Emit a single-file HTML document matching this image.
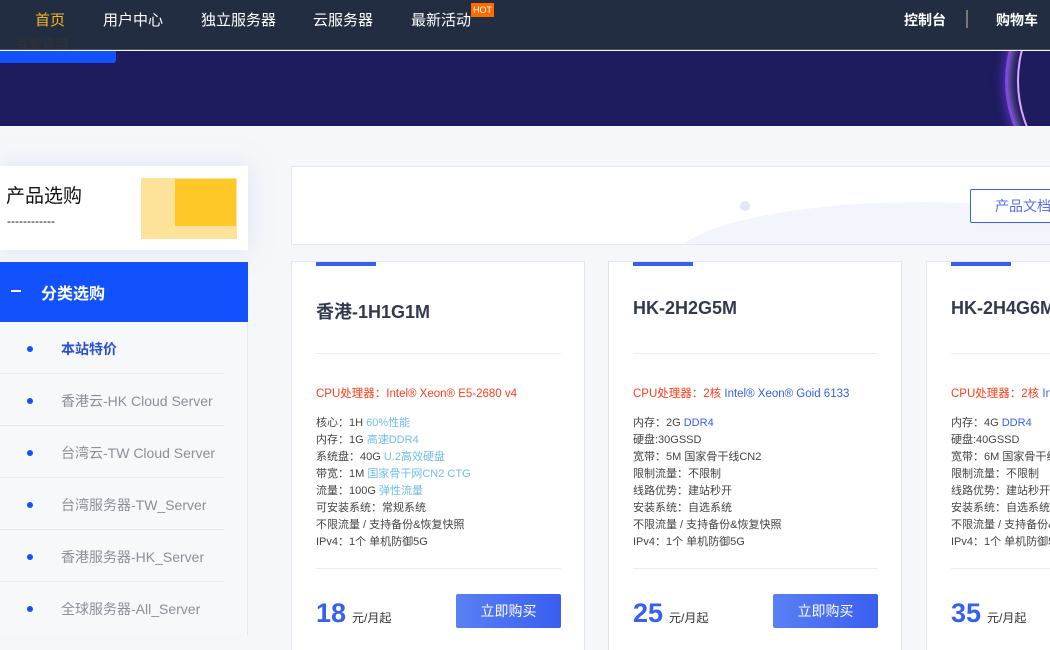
<!DOCTYPE html>
<html><head><meta charset="utf-8"><style>
*{margin:0;padding:0;box-sizing:border-box}
html,body{width:1050px;height:650px;overflow:hidden}
body{background:#f6f7fb;font-family:"Liberation Sans","Noto Sans CJK SC",sans-serif;position:relative}
.nav{position:absolute;left:0;top:0;width:1050px;height:50px;background:#222d42;border-bottom:1px solid #4a5260}
.nav span{position:absolute;top:9px;color:#fff;font-size:15px}
.banner{position:absolute;left:0;top:51px;width:1050px;height:75px;background:#1e1b5e;overflow:hidden}
.abs{position:absolute}
.side{position:absolute;left:0;top:166px;width:248px;height:84px;background:#fff;box-shadow:0 0 20px rgba(200,205,235,.5)}
.cat{position:absolute;left:0;top:262px;width:248px;height:60px;background:#1151fe;color:#fff;font-size:16px;font-weight:bold}
.list{position:absolute;left:0;top:322px;width:248px;height:313px;background:#f7f8fa;border-right:1px solid #e6e8ef}
.li{position:absolute;left:0;width:224px;height:52px;border-bottom:1px solid #e8eaef;font-size:14px;color:#8a8f99}
.li i{position:absolute;left:27px;top:24px;width:6px;height:6px;border-radius:50%;background:#1151fe}
.li b{position:absolute;left:61px;top:17px;font-weight:normal}
.top{position:absolute;left:291px;top:166px;width:759px;height:79px;background:#fff;border:1px solid #e3e6ef;border-right:0;overflow:hidden}
.card{position:absolute;top:261px;width:294px;height:389px;background:#fff;border:1px solid #e3e6ef;border-bottom:0;overflow:hidden}
.card .bar{position:absolute;left:24px;top:0;width:60px;height:4px;background:#3560f0}
.card h3{position:absolute;left:24px;top:36px;font-size:18px;color:#333a4f;white-space:nowrap}
.card .hr{position:absolute;left:24px;width:245px;height:1px;background:#e8ecf4}
.card .cpu{position:absolute;left:24px;top:123px;font-size:11.5px;color:#ff3c1a;white-space:nowrap}
.card .specs{position:absolute;left:24px;top:153px;font-size:11px;color:#444;line-height:17px;white-space:nowrap}
.lb{color:#6fbde8}.bl{color:#3560f0}
.price{position:absolute;left:24px;top:336px;font-size:27px;font-weight:bold;color:#3560f0;white-space:nowrap}
.price small{font-size:12px;color:#333;font-weight:normal;margin-left:6px}
.buy{position:absolute;left:164px;top:332px;width:105px;height:34px;background:linear-gradient(90deg,#5a80f4,#3a5ef0);color:#fff;font-size:14px;text-align:center;line-height:34px;border-radius:2px}
</style></head><body>
<div class="nav">
<span style="left:35px;color:#f5b81c">首页</span>
<span style="left:103px">用户中心</span>
<span style="left:201px">独立服务器</span>
<span style="left:313px">云服务器</span>
<span style="left:411px">最新活动</span>
<div class="abs" style="left:471px;top:3px;width:23px;height:14px;background:#ff6a00;color:#fff;font-size:9px;text-align:center;line-height:14px">HOT</div>
<span style="left:904px;font-weight:bold;font-size:14px;top:10px">控制台</span>
<div class="abs" style="left:966px;top:10px;width:2px;height:18px;background:#777"></div>
<span style="left:996px;font-weight:bold;font-size:14px;top:10px">购物车</span>
<span style="left:16px;top:33px;font-size:13px;color:#333">我要咨询</span>
</div>
<div class="banner">
<div class="abs" style="left:0;top:0;width:116px;height:12px;background:#1151fe;border-radius:0 0 3px 0"></div>
<div class="abs" style="left:1005px;top:-70px;width:160px;height:200px;border-radius:50%;border:3px solid #7a4de0;box-shadow:0 0 12px #6a3ad8,inset 0 0 10px #c38af0"></div>
<div class="abs" style="left:1017px;top:-70px;width:160px;height:200px;border-radius:50%;border:2px solid #d9a8ff"></div>
</div>
<div class="side">
<div class="abs" style="left:6px;top:15px;font-size:19px;color:#111">产品选购</div>
<div class="abs" style="left:7px;top:48px;font-size:12px;color:#111">------------</div>
<div class="abs" style="left:141px;top:12px;width:96px;height:61px;background:#fde39a"></div>
<div class="abs" style="left:175px;top:13px;width:61px;height:47px;background:#ffc829"></div>
</div>
<div class="cat"><div class="abs" style="left:11px;top:28px;width:10px;height:2px;background:#fff"></div><span class="abs" style="left:41px;top:18px">分类选购</span></div>
<div class="list">
<div class="li" style="top:0"><i></i><b style="color:#2a4fd8;font-weight:bold">本站特价</b></div>
<div class="li" style="top:52px"><i></i><b>香港云-HK Cloud Server</b></div>
<div class="li" style="top:104px"><i></i><b>台湾云-TW Cloud Server</b></div>
<div class="li" style="top:156px"><i></i><b>台湾服务器-TW_Server</b></div>
<div class="li" style="top:208px"><i></i><b>香港服务器-HK_Server</b></div>
<div class="li" style="top:260px;border:0"><i></i><b>全球服务器-All_Server</b></div>
</div>
<div class="top">
<div class="abs" style="left:380px;top:35px;width:500px;height:120px;border-radius:50%;background:#f3f5fd"></div>
<div class="abs" style="left:448px;top:34px;width:10px;height:10px;border-radius:50%;background:#e2e6fa"></div>
<div class="abs" style="left:678px;top:22px;width:100px;height:34px;border:1px solid #3a5ef0;border-radius:2px;background:#fff;color:#5a6cf0;font-size:14px;line-height:32px;padding-left:24px">产品文档</div>
</div>
<div class="card" style="left:291px"><div class="bar"></div><h3>香港-1H1G1M</h3><div class="hr" style="top:91px"></div>
<div class="cpu">CPU处理器：Intel® Xeon® E5-2680 v4</div>
<div class="specs">核心：1H <span class="lb">60%性能</span><br>内存：1G <span class="lb">高速DDR4</span><br>系统盘：40G <span class="lb">U.2高效硬盘</span><br>带宽：1M <span class="lb">国家骨干网CN2 CTG</span><br>流量：100G <span class="lb">弹性流量</span><br>可安装系统：常规系统<br>不限流量 / 支持备份&amp;恢复快照<br>IPv4：1个 单机防御5G</div>
<div class="hr" style="top:306px"></div><div class="price">18<small>元/月起</small></div><div class="buy">立即购买</div></div>
<div class="card" style="left:608px"><div class="bar"></div><h3>HK-2H2G5M</h3><div class="hr" style="top:91px"></div>
<div class="cpu">CPU处理器：2核 <span class="bl">Intel® Xeon® Goid 6133</span></div>
<div class="specs">内存：2G <span class="bl">DDR4</span><br>硬盘:30GSSD<br>宽带：5M 国家骨干线CN2<br>限制流量：不限制<br>线路优势：建站秒开<br>安装系统：自选系统<br>不限流量 / 支持备份&amp;恢复快照<br>IPv4：1个 单机防御5G</div>
<div class="hr" style="top:306px"></div><div class="price">25<small>元/月起</small></div><div class="buy">立即购买</div></div>
<div class="card" style="left:926px;width:124px;border-right:0"><div class="bar"></div><h3>HK-2H4G6M</h3><div class="hr" style="top:91px"></div>
<div class="cpu">CPU处理器：2核 <span class="bl">Intel® Xeon® Goid 6133</span></div>
<div class="specs">内存：4G <span class="bl">DDR4</span><br>硬盘:40GSSD<br>宽带：6M 国家骨干线CN2<br>限制流量：不限制<br>线路优势：建站秒开<br>安装系统：自选系统<br>不限流量 / 支持备份&amp;恢复快照<br>IPv4：1个 单机防御5G</div>
<div class="hr" style="top:306px"></div><div class="price">35<small>元/月起</small></div></div>
</body></html>
